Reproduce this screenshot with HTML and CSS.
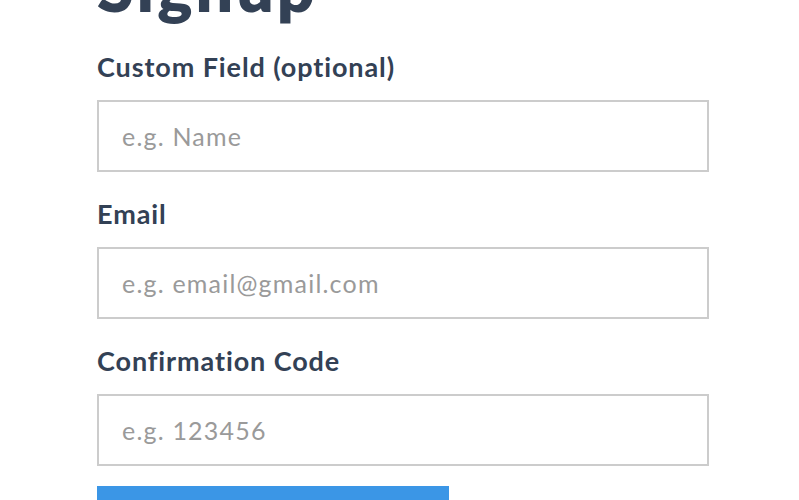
FILE: index.html
```html
<!DOCTYPE html>
<html lang="en">
<head>
<meta charset="utf-8">
<title>Signup</title>
<link rel="stylesheet" href="styles.css">
</head>
<body>
<main class="page">
  <h1 class="title">Signup</h1>
  <form class="form">
    <div class="field">
      <label class="label" for="custom">Custom Field (optional)</label>
      <input class="input" id="custom" type="text" placeholder="e.g. Name">
    </div>
    <div class="field">
      <label class="label" for="email">Email</label>
      <input class="input" id="email" type="email" placeholder="e.g. email@gmail.com">
    </div>
    <div class="field">
      <label class="label" for="code">Confirmation Code</label>
      <input class="input" id="code" type="text" placeholder="e.g. 123456">
    </div>
    <button class="button" type="button">Signup</button>
  </form>
</main>
</body>
</html>
```
FILE: styles.css
```css
html, body {
  margin: 0;
  padding: 0;
  background: #ffffff;
  overflow: hidden;
}
body {
  font-family: "Lato", "Noto Sans", sans-serif;
  color: #334155;
}
.page {
  padding-left: 97px;
  width: 612px;
}
.title {
  margin: -46px 0 0 0;
  height: 97px;
  font-size: 66px;
  line-height: 66px;
  font-weight: 800;
  letter-spacing: 3px;
  color: #334155;
}
.form {
  display: flex;
  flex-direction: column;
  gap: 26px;
}
.field {
  display: flex;
  flex-direction: column;
}
.label {
  font-size: 27px;
  line-height: 32px;
  font-weight: 700;
  letter-spacing: 0.9px;
  color: #334155;
  margin-bottom: 17px;
}
.input {
  box-sizing: border-box;
  width: 612px;
  height: 72px;
  border: 2px solid #cccccc;
  border-radius: 0;
  padding: 0 23px;
  font-family: inherit;
  font-size: 25px;
  letter-spacing: 1.2px;
  color: #334155;
  background: #ffffff;
  outline: none;
}
.input::placeholder {
  color: #9a9a9a;
}
.button {
  margin-top: -6px;
  width: 352px;
  height: 64px;
  border: none;
  background: #3b96e6;
  color: #ffffff;
  font-family: inherit;
  font-size: 24px;
  font-weight: 700;
}
```
